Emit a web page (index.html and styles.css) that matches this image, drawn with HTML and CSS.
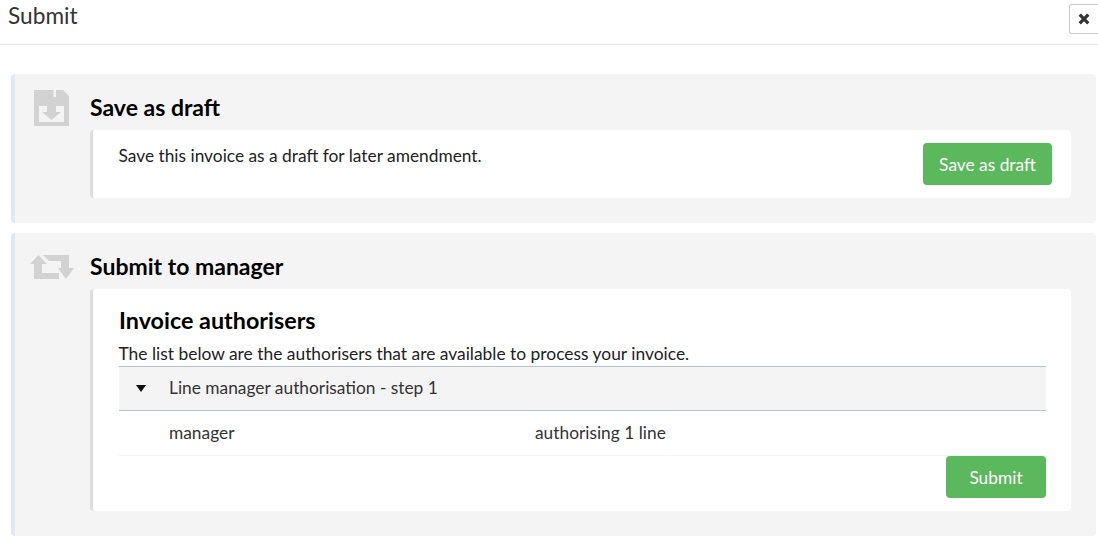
FILE: index.html
```html
<!DOCTYPE html>
<html lang="en">
<head>
    <meta charset="UTF-8">
    <title>Submit</title>
    <link rel="stylesheet" href="styles.css">
</head>
<body>
    <div class="modal-header">
        <h4 class="modal-title">Submit</h4>
        <button class="close-button" aria-label="Close">
            <svg width="12" height="12" viewBox="0 0 12 12"><path d="M1.700 1.700l8.600 8.600M10.300 1.700l-8.600 8.600" stroke="#333" stroke-width="3.200" fill="none"/></svg>
        </button>
    </div>

    <div class="modal-body">
        <section class="panel panel-draft">
            <div class="panel-head">
                <div class="panel-icon">
                    <svg width="35" height="36" viewBox="0 0 35 36">
                        <path fill="#d2d2d2" fill-rule="evenodd" d="M1 0H29L35 6V35a1 1 0 0 1-1 1H1a1 1 0 0 1-1-1V1a1 1 0 0 1 1-1zM19.500 0V7H22V0zM5 16V32H30V16z"/>
                        <path fill="#d2d2d2" d="M13 15H22V22H27L17.500 30 8 22H13z"/>
                    </svg>
                </div>
                <h3 class="panel-title">Save as draft</h3>
            </div>
            <div class="card card-row">
                <p>Save this invoice as a draft for later amendment.</p>
                <button class="btn-green btn-draft">Save as draft</button>
            </div>
        </section>

        <section class="panel panel-submit">
            <div class="panel-head">
                <div class="panel-icon icon-repeat">
                    <svg width="44" height="24" viewBox="0 0 44 24">
                        <path fill="#d2d2d2" d="M8.500 0L17 9H12V18H29V24H4V9H0zM13 0H39V13H44L36 24 28 13H31V6H19z"/>
                    </svg>
                </div>
                <h3 class="panel-title">Submit to manager</h3>
            </div>
            <div class="card card-list">
                <h3 class="card-title">Invoice authorisers</h3>
                <p class="card-text">The list below are the authorisers that are available to process your invoice.</p>
                <div class="step-row">
                    <span class="step-arrow"></span>
                    <span>Line manager authorisation - step 1</span>
                </div>
                <div class="user-row">
                    <span class="user-name">manager</span>
                    <span>authorising 1 line</span>
                </div>
                <div class="card-actions">
                    <button class="btn-green btn-submit">Submit</button>
                </div>
            </div>
        </section>
    </div>
</body>
</html>
```

FILE: styles.css
```css
* {
    margin: 0;
    padding: 0;
    box-sizing: border-box;
}

body {
    font-family: Lato, "Open Sans", sans-serif;
    font-size: 17.33px;
    color: #222;
    background-color: #fff;
    overflow: hidden;
}

.modal-header {
    height: 45px;
    border-bottom: 1px solid #e5e5e5;
    display: flex;
    justify-content: space-between;
    padding-left: 8px;
}

.modal-title {
    font-size: 22.67px;
    font-weight: 400;
    line-height: 32px;
    color: #333;
}

.close-button {
    width: 29px;
    height: 30px;
    margin-top: 4px;
    background-color: #fff;
    border: 1px solid #ccc;
    border-right: none;
    border-radius: 3px 0 0 3px;
    display: flex;
    align-items: center;
    justify-content: center;
}

.modal-body {
    padding: 29px 2px 0 11px;
}

.panel {
    background-color: #f4f4f4;
    border-left: 4px solid #dfe8f8;
    border-radius: 4px;
    padding-right: 25px;
    margin-bottom: 10px;
}

.panel-draft {
    height: 149px;
}

.panel-submit {
    height: 303px;
}

.panel-head {
    display: flex;
    align-items: center;
    height: 56px;
    padding-top: 12px;
}

.panel-icon {
    width: 75px;
    display: flex;
    justify-content: center;
    padding-right: 3px;
    height: 36px;
    align-items: center;
}

.icon-repeat {
    padding-right: 1px;
}

.panel-title {
    font-size: 23px;
    font-weight: 700;
    color: #000;
    line-height: 30px;
    margin-top: -2px;
}

.card {
    margin-left: 75px;
    background-color: #fff;
    border-left: 3px solid #ddd;
    border-radius: 4px;
}

.card-row {
    height: 68px;
    padding: 13px 19px 0 25.500px;
    display: flex;
    justify-content: space-between;
    align-items: flex-start;
    line-height: 26px;
}

.card-list {
    height: 222px;
    padding: 14px 25px 0 26px;
}

.card-title {
    font-size: 23.33px;
    font-weight: 700;
    color: #000;
    line-height: 34px;
}

.card-text {
    font-size: 17.400px;
    line-height: 26px;
    height: 25px;
    margin-top: 4px;
    margin-left: -0.500px;
}

.step-row {
    height: 45px;
    background-color: #f4f4f4;
    border-top: 1px solid #b4c4cf;
    border-bottom: 1px solid #b4c4cf;
    display: flex;
    align-items: center;
    padding: 0 0 2px 17px;
    color: #333;
}

.step-arrow {
    width: 0;
    height: 0;
    border-left: 5px solid transparent;
    border-right: 5px solid transparent;
    border-top: 7px solid #111;
    margin: 2px 23px 0 0;
}

.user-row {
    height: 45px;
    border-bottom: 1px solid #f3f3f3;
    display: flex;
    align-items: center;
    padding: 0 0 2px 50px;
    color: #333;
}

.user-name {
    width: 366px;
}

.card-actions {
    display: flex;
    justify-content: flex-end;
}

.btn-green {
    background-color: #5cb85c;
    color: #fff;
    border: none;
    border-radius: 4px;
    font-family: inherit;
    font-size: 17.33px;
    cursor: pointer;
}

.btn-draft {
    width: 129px;
    height: 42px;
}

.btn-submit {
    width: 100px;
    height: 42px;
}
```
